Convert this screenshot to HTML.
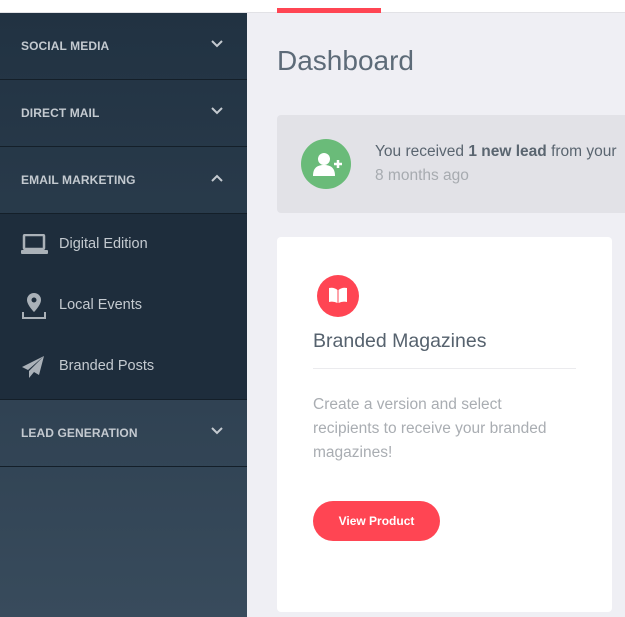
<!DOCTYPE html>
<html><head><style>
*{margin:0;padding:0;box-sizing:border-box}
body{width:625px;height:617px;overflow:hidden;background:#efeff4;font-family:"Liberation Sans",sans-serif;position:relative}
.top{position:absolute;left:0;top:0;width:625px;height:13px;background:#fff;border-bottom:1px solid #e2e2e6}
.red{position:absolute;left:277px;top:8px;width:104px;height:5px;background:#ff4553}
.side{position:absolute;left:0;top:13px;width:247px;height:604px;background:linear-gradient(#213242,#384b5c)}
.hd{height:67px;border-bottom:1px solid #141f29;position:relative;color:#c4cad0;font-size:12px;font-weight:bold;padding-left:21px;line-height:67px;letter-spacing:.1px}
.hd svg{position:absolute;right:24px;top:27px}
.sub{background:#1e2d3c;height:186px;border-bottom:1px solid #141f29}
.it{height:61px;position:relative;color:#c4cad0;font-size:14.5px;padding-left:59px;line-height:61px}
.it svg{position:absolute;left:21px}
.title{position:absolute;left:277px;top:45px;font-size:28px;color:#5d6b78}
.note{position:absolute;left:277px;top:115px;width:348px;height:98px;background:#e2e2e7;border-radius:4px 0 0 4px}
.gc{position:absolute;left:24px;top:24px;width:50px;height:50px;border-radius:50%;background:#6abb79}
.n1{position:absolute;left:98px;top:28px;font-size:15.5px;color:#5a6570;white-space:nowrap}
.n2{position:absolute;left:98px;top:52px;font-size:15.5px;color:#a7abb0}
.card{position:absolute;left:277px;top:237px;width:335px;height:375px;background:#fff;border-radius:4px}
.rc{position:absolute;left:40px;top:38px;width:42px;height:42px;border-radius:50%;background:#ff4553}
.ct{position:absolute;left:36px;top:93px;font-size:19.5px;color:#56626e}
.hr{position:absolute;left:36px;top:131px;width:263px;height:1px;background:#ebebee}
.cd{position:absolute;left:36px;top:156px;width:240px;font-size:15.5px;line-height:24px;color:#a9adb2}
.btn{position:absolute;left:36px;top:264px;width:127px;height:40px;border-radius:20px;background:#ff4553;color:#fff;font-size:12px;font-weight:bold;text-align:center;line-height:40px}
</style></head><body>
<div class="top"></div><div class="red"></div>
<div class="side">
<div class="hd">SOCIAL MEDIA<svg width="12" height="8"><path d="M1 1l5 5 5-5" stroke="#c4cad0" stroke-width="2" fill="none"/></svg></div>
<div class="hd">DIRECT MAIL<svg width="12" height="8"><path d="M1 1l5 5 5-5" stroke="#c4cad0" stroke-width="2" fill="none"/></svg></div>
<div class="hd">EMAIL MARKETING<svg width="12" height="8"><path d="M1 7l5-5 5 5" stroke="#c4cad0" stroke-width="2" fill="none"/></svg></div>
<div class="sub">
<div class="it"><svg style="top:20px" width="27" height="21"><rect x="3" y="1" width="20" height="14" rx="1" fill="none" stroke="#aab1b8" stroke-width="2.5"/><rect x="0" y="16" width="27" height="4" rx="1" fill="#aab1b8"/></svg>Digital Edition</div>
<div class="it"><svg style="top:17px" width="26" height="28"><path d="M13 1a7 7 0 0 0-7 7c0 5 7 12 7 12s7-7 7-12a7 7 0 0 0-7-7z" fill="#aab1b8"/><circle cx="13" cy="8" r="2.5" fill="#1e2d3c"/><path d="M2 20v6h22v-6" stroke="#aab1b8" stroke-width="2" fill="none"/></svg>Local Events</div>
<div class="it"><svg style="top:19px" width="24" height="24"><path d="M23 1L1 12l6 3zM23 1L8 16l0 7 5-6 5 3z" fill="#aab1b8"/></svg>Branded Posts</div>
</div>
<div class="hd">LEAD GENERATION<svg width="12" height="8"><path d="M1 1l5 5 5-5" stroke="#c4cad0" stroke-width="2" fill="none"/></svg></div>
</div>
<div class="title">Dashboard</div>
<div class="note"><div class="gc"><svg width="50" height="50"><circle cx="23" cy="20" r="6" fill="#fff"/><path d="M12 37c0-8 4-11 11-11s11 3 11 11z" fill="#fff"/><path d="M33 25h8M37 21v8" stroke="#fff" stroke-width="2.5"/></svg></div>
<div class="n1">You received <b>1 new lead</b> from your</div><div class="n2">8 months ago</div></div>
<div class="card">
<div class="rc"><svg width="42" height="42"><path d="M12 13q5-1 8.5 2v13q-4-2-8.5-1zM30 13q-5-1-8.5 2v13q4-2 8.5-1z" fill="#fff"/></svg></div>
<div class="ct">Branded Magazines</div><div class="hr"></div>
<div class="cd">Create a version and select recipients to receive your branded magazines!</div>
<div class="btn">View Product</div>
</div>
</body></html>
